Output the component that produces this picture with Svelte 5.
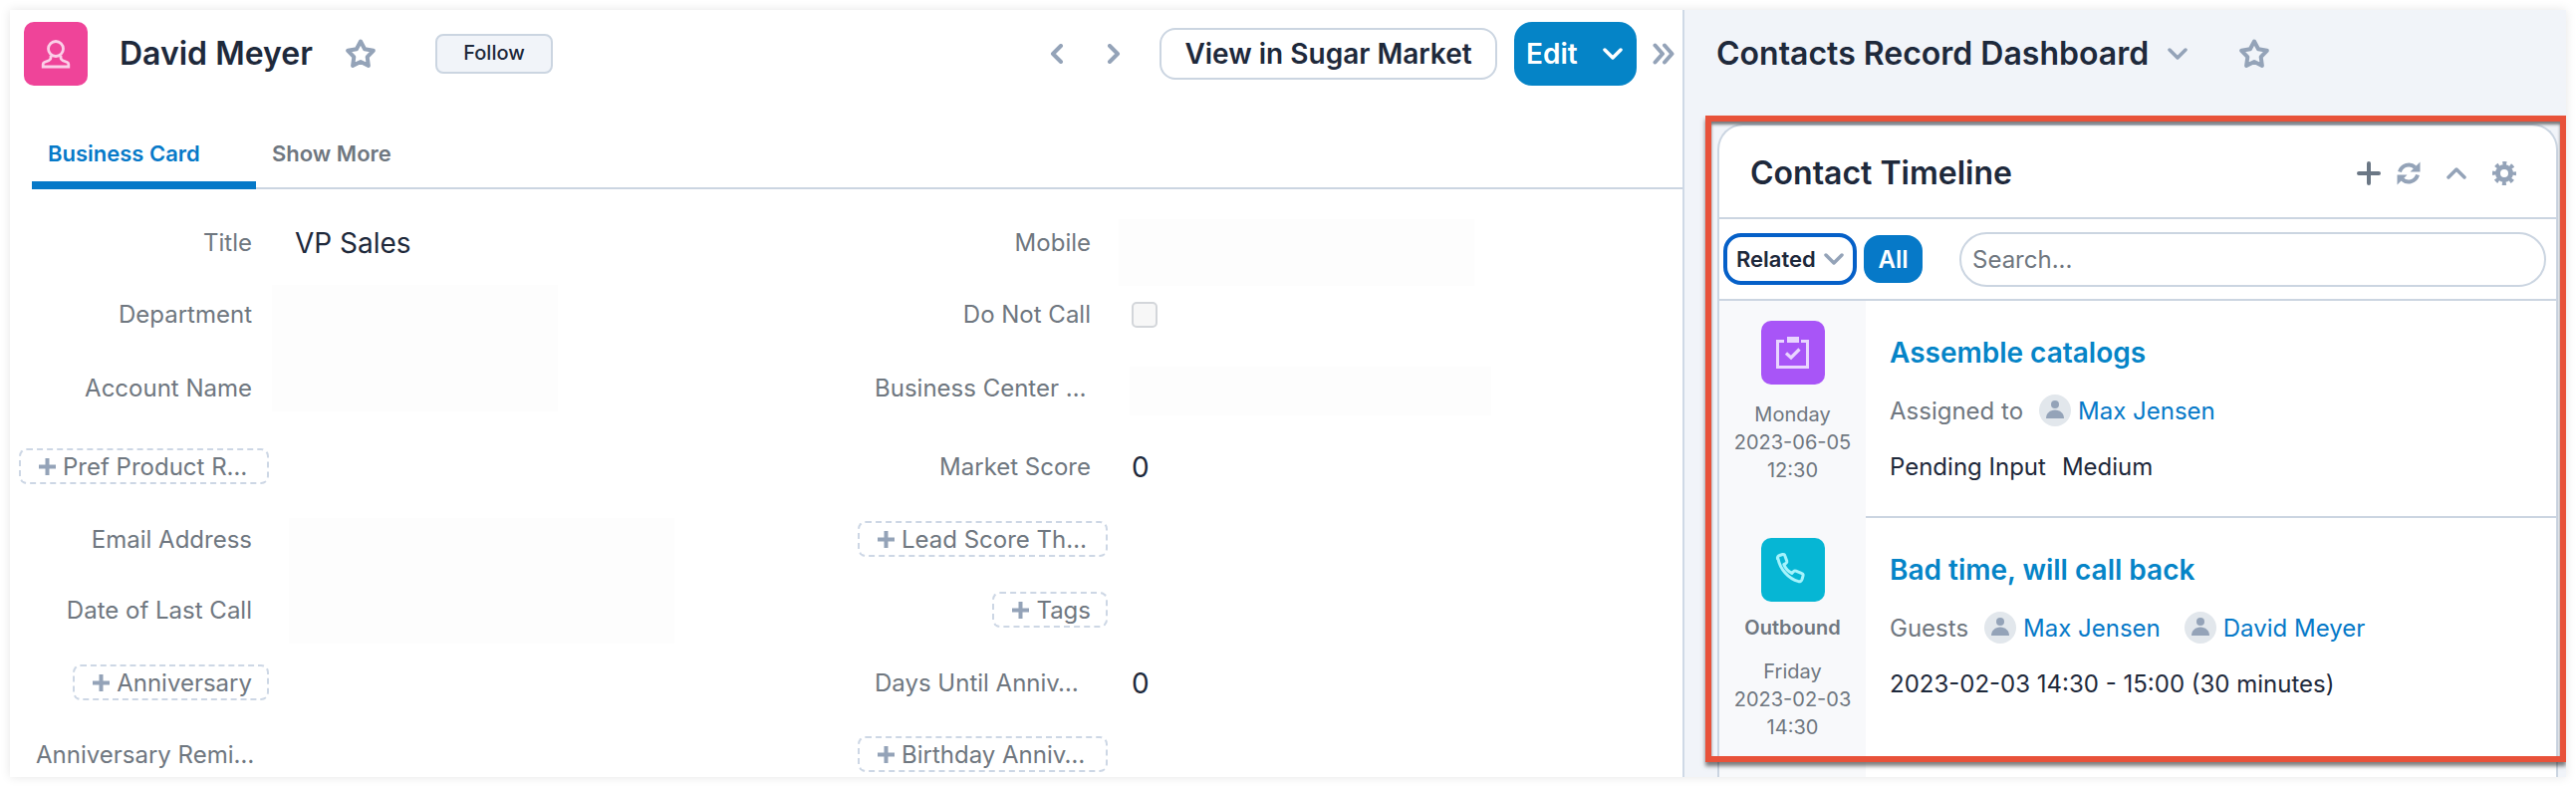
<script>
	const rows = [
		{ left: { label: "Title", value: "VP Sales" }, right: { label: "Mobile" } },
		{ left: { label: "Department" }, right: { label: "Do Not Call", check: true } },
		{ left: { label: "Account Name" }, right: { label: "Business Center …", cut: true } },
		{ left: { add: "Pref Product R…", cut: true }, right: { label: "Market Score", value: "0" } },
		{ left: { label: "Email Address" }, right: { add: "Lead Score Th…", cut: true } },
		{ left: { label: "Date of Last Call" }, right: { add: "Tags" } },
		{ left: { add: "Anniversary" }, right: { label: "Days Until Anniv…", cut: true, value: "0" } },
		{ left: { label: "Anniversary Remi…", cut: true }, right: { add: "Birthday Anniv…", cut: true } }
	];
</script>

{#snippet star()}
	<svg class="star" width="30" height="30" viewBox="0 0 30 30">
		<path d="M15 2.500l4.100 7.800 8.700 1.500-6.100 6.400 1.200 8.700-7.900-3.900-7.900 3.900 1.200-8.700-6.100-6.400 8.700-1.500z" />
	</svg>
{/snippet}

{#snippet chevron(cls)}
	<svg class={cls} width="20" height="12" viewBox="0 0 20 12">
		<path d="M2 2l8 8 8-8" />
	</svg>
{/snippet}

{#snippet person()}
	<svg class="person" width="32" height="32" viewBox="0 0 32 32">
		<circle cx="16" cy="10" r="4" />
		<path d="M7 24c0-5 4-8.500 9-8.500s9 3.500 9 8.500z" />
	</svg>
{/snippet}

{#snippet cell(f, row, side)}
	<div class="label-cell {side}" style="grid-row: {row}">
		{#if f.add}
			<span class="add" class:cut={f.cut}>
				<svg width="17" height="17" viewBox="0 0 17 17"><path d="M8.500 0v17M0 8.500h17" /></svg>
				{f.add}
			</span>
		{:else}
			<span class="label" class:cut={f.cut}>{f.label}</span>
		{/if}
	</div>
	{#if f.value}
		<div class="value {side}" style="grid-row: {row}">{f.value}</div>
	{/if}
	{#if f.check}
		<div class="value {side}" style="grid-row: {row}"><span class="check"></span></div>
	{/if}
{/snippet}

<div class="frame">
	<main class="record">
		<header class="head">
			<div class="avatar">
				<svg width="64" height="64" viewBox="0 0 64 64" stroke="#fbcfe8" stroke-width="2.800">
					<circle cx="32" cy="27" r="7.500" />
					<path d="M27 34v2c0 1.500-1 2.300-2 2.800l-4.500 1.700c-1 .4-1.300 1-1.300 2v2.500h25.600v-2.500c0-1-.3-1.600-1.300-2l-4.500-1.700c-1-.5-2-1.300-2-2.800v-2" />
				</svg>
			</div>
			<h1>David Meyer</h1>
			{@render star()}
			<button class="follow">Follow</button>
			<div class="pager">
				<svg width="14" height="20" viewBox="0 0 14 20"><path d="M11 2l-8 8 8 8" /></svg>
				<svg width="14" height="20" viewBox="0 0 14 20"><path d="M3 2l8 8-8 8" /></svg>
			</div>
			<button class="market">View in Sugar Market</button>
			<button class="edit">Edit {@render chevron("edit-chev")}</button>
			<svg class="collapse" width="22" height="22" viewBox="0 0 22 22">
				<path d="M2.500 2.500l7.500 8.500-7.500 8.500M12 2.500l7.500 8.500-7.500 8.500" />
			</svg>
		</header>

		<nav class="tabs">
			<span class="tab active">Business Card</span>
			<span class="tab">Show More</span>
		</nav>

		<section class="form">
			<div class="blank b-dept"></div>
			<div class="blank b-email"></div>
			<div class="blank b-mobile"></div>
			<div class="blank b-biz"></div>
			{#each rows as r, i}
				{@render cell(r.left, i + 1, "left")}
				{@render cell(r.right, i + 1, "right")}
			{/each}
		</section>
	</main>

	<aside class="dash">
		<header class="dash-head">
			<h2>Contacts Record Dashboard</h2>
			{@render chevron("dash-chev")}
			{@render star()}
		</header>

		<div class="card">
			<div class="card-head">
				<h3>Contact Timeline</h3>
				<div class="tools">
					<svg class="plus" width="24" height="24" viewBox="0 0 24 24"><path d="M12 2v20M2 12h20" /></svg>
					<svg class="sync" width="24" height="24" viewBox="0 0 24 24">
						<path d="M3 10.500A9.500 9.500 0 0 1 18.500 6" />
						<path d="M21 13.500A9.500 9.500 0 0 1 5.500 18" />
						<path class="solid" d="M23.500 .5v10h-10zM.5 23.500v-10h10z" />
					</svg>
					<svg class="up" width="20" height="12" viewBox="0 0 20 12"><path d="M2 10l8-8 8 8" /></svg>
					<svg class="gear" width="24" height="24" viewBox="0 0 24 24">
						<circle cx="12" cy="12" r="6.500" stroke-width="5" />
						<circle cx="12" cy="12" r="10" stroke-width="4" stroke-dasharray="3.900 3.954" stroke-dashoffset="1.950" />
					</svg>
				</div>
			</div>

			<div class="filters">
				<div class="select">Related {@render chevron("sel-chev")}</div>
				<button class="all">All</button>
				<div class="search">Search...</div>
			</div>

			<article class="item">
				<div class="when">
					<div class="badge purple">
						<svg width="64" height="64" viewBox="0 0 64 64" stroke="#e9d5ff" stroke-width="3">
							<path d="M23 20.500h-6.500v26h30v-26h-6.500" />
							<path class="tab-fill" d="M26 16h12v6h-12z" />
							<path d="M25 32.500l5 4.500 8.500-8.500" stroke-width="3.200" />
						</svg>
					</div>
					<div class="stamp">Monday<br />2023-06-05<br />12:30</div>
				</div>
				<div class="body">
					<a class="subject" href="#a">Assemble catalogs</a>
					<div class="line">
						<span class="muted">Assigned to</span>
						{@render person()}
						<a class="who" href="#m">Max Jensen</a>
					</div>
					<div class="line dark"><span>Pending Input</span><span>Medium</span></div>
				</div>
			</article>

			<article class="item">
				<div class="when">
					<div class="badge cyan">
						<svg width="64" height="64" viewBox="0 0 64 64" stroke="#a5f3fc" stroke-width="3" stroke-linejoin="round">
							<path d="M16.500 21c-.5-1.500.5-3 2-3.500l3-1c1-.3 2 .2 2.300 1.200l2 5.500c.3 1-.2 1.700-1 2.200l-2 1.200c1.500 3.700 4.300 7 8 8.800l1.600-1.700c.7-.7 1.600-1 2.500-.6l6 2.600c1 .4 1.400 1.400 1.100 2.400l-1 3.500c-.5 1.500-2 2.500-3.500 2-10.500-2.600-18.500-12.600-20.500-22.600z" />
						</svg>
					</div>
					<div class="direction">Outbound</div>
					<div class="stamp">Friday<br />2023-02-03<br />14:30</div>
				</div>
				<div class="body">
					<a class="subject" href="#b">Bad time, will call back</a>
					<div class="line">
						<span class="muted">Guests</span>
						{@render person()}
						<a class="who" href="#m">Max Jensen</a>
						{@render person()}
						<a class="who" href="#d">David Meyer</a>
					</div>
					<div class="line dark">2023-02-03 14:30 - 15:00 (30 minutes)</div>
				</div>
			</article>
		</div>
	</aside>

	<div class="callout"></div>
</div>

<style>
	:global(body) {
		margin: 0;
		background: #fff;
	}
	.frame {
		position: relative;
		display: flex;
		width: 2566px;
		height: 770px;
		margin: 10px;
		font-family: Inter, "Noto Sans", sans-serif;
		color: #1e293b;
		box-shadow: 0 0 10px rgba(0, 0, 0, 0.1);
		overflow: hidden;
		background: #fff;
	}
	h1, h2, h3 {
		margin: 0;
		font-size: 32px;
		line-height: 40px;
		font-weight: 600;
	}
	button {
		font-family: inherit;
		cursor: pointer;
	}
	svg path, svg circle {
		fill: none;
	}
	.record {
		width: 1679px;
		flex: none;
		border-right: 2px solid #cfd9e6;
	}
	.head {
		display: flex;
		align-items: center;
		height: 64px;
		padding: 12px 0 0 14px;
	}
	.avatar {
		width: 64px;
		height: 64px;
		border-radius: 10px;
		background: #ef4499;
	}
	h1 {
		margin-left: 32px;
		width: 227px;
	}
	.star {
		flex: none;
	}
	.star path {
		stroke: #94a3b8;
		stroke-width: 4;
		stroke-linejoin: round;
	}
	.follow {
		width: 118px;
		height: 40px;
		margin-left: 60px;
		padding: 0 0 2px;
		border: 2px solid #cbd5e1;
		border-radius: 8px;
		background: #f1f4f9;
		color: #1e293b;
		font-size: 20px;
		font-weight: 500;
	}
	.pager {
		display: flex;
		gap: 43px;
		margin-left: auto;
	}
	.pager path, .collapse path {
		stroke: #94a3b8;
		stroke-width: 4;
		stroke-linecap: round;
		stroke-linejoin: round;
	}
	.market {
		width: 339px;
		height: 52px;
		margin-left: 39px;
		padding: 0;
		border: 2px solid #cbd5e1;
		border-radius: 16px;
		background: #fff;
		color: #1e293b;
		font-size: 28px;
		font-weight: 600;
	}
	.edit {
		display: flex;
		align-items: center;
		justify-content: space-between;
		width: 123px;
		height: 64px;
		margin-left: 17px;
		padding: 0 14px 0 12px;
		border: 0;
		border-radius: 18px;
		background: #0584c7;
		color: #fff;
		font-size: 28px;
		font-weight: 600;
	}
	:global(.edit-chev) path {
		stroke: #fff;
		stroke-width: 3.500;
		stroke-linecap: round;
		stroke-linejoin: round;
	}
	.collapse {
		margin: 0 8px 0 16px;
	}
	.tabs {
		display: flex;
		height: 92px;
		margin: 12px 0 17px 22px;
		border-bottom: 2px solid #cbd5e1;
		box-sizing: border-box;
	}
	.tab {
		display: flex;
		align-items: flex-end;
		flex: none;
		height: 92px;
		padding: 0 16px 24px;
		box-sizing: border-box;
		font-size: 22px;
		line-height: 24px;
		font-weight: 600;
		color: #6f7780;
	}
	.tab.active {
		width: 225px;
		padding-bottom: 16px;
		color: #0679c8;
		border-bottom: 8px solid #0679c8;
	}
	.form {
		display: grid;
		grid-template-columns: 260px 590px 252px 1fr;
		grid-template-rows: 72px 72px 76px 82px 64px 78px 68px 76px;
		font-size: 24px;
	}
	.label-cell {
		display: flex;
		align-items: center;
		justify-content: flex-end;
		white-space: nowrap;
		color: #6f7780;
	}
	.label-cell.left {
		grid-column: 1;
	}
	.label-cell.right {
		grid-column: 3;
	}
	.label {
		margin-right: 17px;
	}
	.label.cut {
		width: 217px;
		text-align: left;
	}
	.add {
		display: flex;
		align-items: center;
		gap: 7px;
		height: 36px;
		padding: 0 15px 0 18px;
		box-sizing: border-box;
		border: 2px dashed #cdd7e5;
		border-radius: 8px;
	}
	.add.cut {
		width: 251px;
	}
	.add path {
		stroke: #94a3b8;
		stroke-width: 4;
	}
	.value {
		display: flex;
		align-items: center;
		padding-top: 1px;
		font-size: 28px;
		color: #1e293b;
	}
	.value.left {
		grid-column: 2;
		margin-left: 26px;
	}
	.value.right {
		grid-column: 4;
		margin-left: 24px;
	}
	.check {
		width: 26px;
		height: 26px;
		box-sizing: border-box;
		border: 2px solid #d3d6da;
		border-radius: 5px;
		background: #f7f7f7;
	}
	.blank {
		background: #fdfdfd;
	}
	.b-dept {
		grid-column: 2;
		grid-row: 2 / 4;
		width: 287px;
		height: 127px;
		margin: 7px 0 0 3px;
	}
	.b-email {
		grid-column: 2;
		grid-row: 5 / 7;
		width: 387px;
		height: 126px;
		margin: 11px 0 0 20px;
	}
	.b-mobile {
		grid-column: 4;
		grid-row: 1 / 3;
		width: 357px;
		height: 67px;
		margin: 13px 0 0 11px;
	}
	.b-biz {
		grid-column: 4;
		grid-row: 3;
		width: 363px;
		height: 49px;
		margin: 17px 0 0 22px;
	}
	.dash {
		flex: 1;
		background: #f1f4f9;
	}
	.dash-head {
		display: flex;
		align-items: center;
		height: 64px;
		padding: 12px 0 0 32px;
	}
	:global(.dash-chev) {
		margin: 0 52px 0 19px;
	}
	:global(.dash-chev) path, :global(.sel-chev) path {
		stroke: #94a3b8;
		stroke-width: 3.500;
		stroke-linecap: round;
		stroke-linejoin: round;
	}
	.card {
		margin: 38px 8px 0 33px;
		height: 700px;
		box-sizing: border-box;
		border: 2px solid #cbd5e1;
		border-bottom: 0;
		border-radius: 26px 26px 0 0;
		background: #fff;
	}
	.card-head {
		display: flex;
		align-items: center;
		justify-content: space-between;
		height: 94px;
		box-sizing: border-box;
		padding: 3px 40px 0 31px;
		border-bottom: 2px solid #cbd5e1;
	}
	.tools {
		display: flex;
		align-items: center;
	}
	.plus path {
		stroke: #6b7785;
		stroke-width: 4;
		stroke-linecap: round;
	}
	.sync {
		margin-left: 16px;
	}
	.sync path {
		stroke: #94a3b8;
		stroke-width: 4;
	}
	.sync path.solid {
		fill: #94a3b8;
		stroke: none;
	}
	.up {
		margin-left: 26px;
	}
	.up path {
		stroke: #94a3b8;
		stroke-width: 3.500;
		stroke-linecap: round;
		stroke-linejoin: round;
	}
	.gear {
		margin-left: 26px;
	}
	.gear circle {
		stroke: #94a3b8;
	}
	.filters {
		display: flex;
		align-items: center;
		height: 80px;
		padding: 0 10px 0 4px;
		border-bottom: 2px solid #cbd5e1;
	}
	.select {
		display: flex;
		align-items: center;
		justify-content: space-between;
		width: 134px;
		height: 52px;
		box-sizing: border-box;
		padding: 0 9px 0 9px;
		border: 4px solid #0560c8;
		border-radius: 18px;
		font-size: 22px;
		font-weight: 600;
	}
	.all {
		width: 59px;
		height: 48px;
		margin-left: 7px;
		padding: 0;
		border: 0;
		border-radius: 16px;
		background: #0679c8;
		color: #fff;
		font-size: 24px;
		font-weight: 600;
	}
	.search {
		flex: 1;
		display: flex;
		align-items: center;
		height: 55px;
		margin-left: 37px;
		padding-left: 11px;
		box-sizing: border-box;
		border: 2px solid #cbd5e1;
		border-radius: 28px;
		font-size: 24px;
		color: #6f7780;
	}
	.item {
		display: flex;
		height: 218px;
	}
	.item:last-child {
		height: 280px;
	}
	.when {
		flex: none;
		width: 147px;
		padding-top: 20px;
		box-sizing: border-box;
		background: #f8f9fb;
		text-align: center;
		color: #6f7780;
	}
	.badge {
		width: 64px;
		height: 64px;
		margin: 0 auto;
		border-radius: 10px;
	}
	.purple {
		background: #a855f7;
	}
	.badge svg path.tab-fill {
		fill: #e9d5ff;
		stroke: none;
	}
	.cyan {
		background: #06b6d4;
	}
	.stamp {
		margin-top: 16px;
		font-size: 20px;
		line-height: 28px;
	}
	.direction {
		margin-top: 12px;
		font-size: 20px;
		line-height: 28px;
		font-weight: 600;
	}
	.body {
		flex: 1;
		padding: 34px 0 0 24px;
		box-sizing: border-box;
		border-bottom: 2px solid #cbd5e1;
	}
	.item:last-child .body {
		border-bottom: 0;
	}
	.subject {
		display: block;
		font-size: 28px;
		line-height: 36px;
		font-weight: 600;
		color: #0584c7;
		text-decoration: none;
	}
	.line {
		display: flex;
		align-items: center;
		height: 32px;
		margin-top: 24px;
		font-size: 24px;
	}
	.muted {
		color: #6f7780;
		margin-right: 16px;
	}
	.dark {
		gap: 16px;
		color: #1e293b;
	}
	.person {
		flex: none;
		border-radius: 50%;
		background: #e2e7ec;
	}
	.person circle, .person path {
		fill: #94a3b8;
	}
	.who {
		margin: 0 24px 0 7px;
		color: #0679c8;
		text-decoration: none;
	}
	.callout {
		position: absolute;
		left: 1702px;
		top: 106px;
		width: 864px;
		height: 649px;
		box-sizing: border-box;
		border: 6px solid #e8523a;
		box-shadow: 0 4px 4px rgba(0, 0, 0, 0.5), inset 0 3px 3px rgba(0, 0, 0, 0.5);
		pointer-events: none;
	}
</style>
